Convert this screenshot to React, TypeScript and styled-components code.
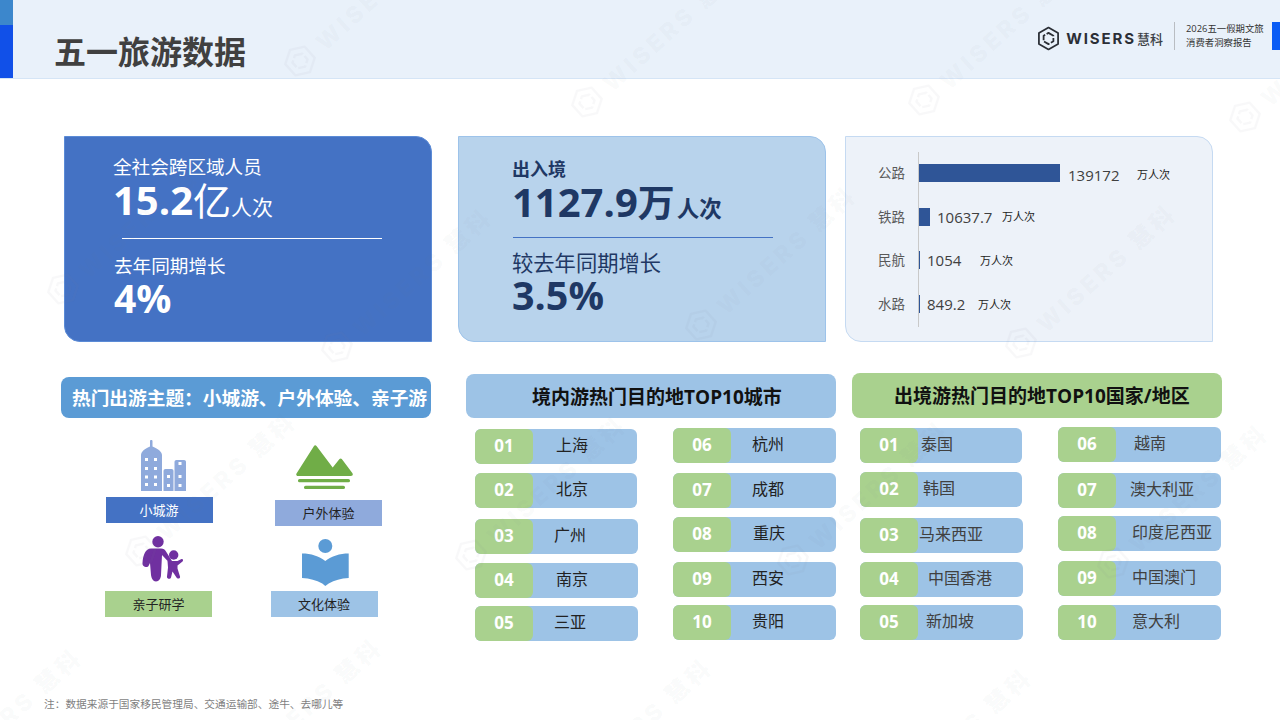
import React from 'react';
import styled, { createGlobalStyle } from 'styled-components';

const FONT = '"Open Sans", "Noto Sans CJK SC", sans-serif';

const GlobalStyle = createGlobalStyle`
  html, body {
    margin: 0;
    padding: 0;
    background: #fff;
    font-family: ${FONT};
  }
`;

const Page = styled.div`
  position: relative;
  width: 1280px;
  height: 720px;
  overflow: hidden;
  background: #fff;
`;

const Header = styled.header`
  height: 78px;
  display: flex;
  align-items: stretch;
  background: #e9f1fa;
  border-bottom: 1px solid #d5e5f6;
`;

const Stripe = styled.div`
  width: 13px;
  display: flex;
  flex-direction: column;
  background: #1150e8;

  &::before {
    content: '';
    height: 25px;
    background: #3c87cc;
  }
`;

const Title = styled.h1`
  margin: 32px 0 0 41px;
  font-size: 32px;
  line-height: 40px;
  font-weight: 700;
  color: #404040;
`;

const HeaderRight = styled.div`
  margin-left: auto;
  display: flex;
  align-items: flex-start;
  padding-top: 22px;
`;

const Brand = styled.div`
  display: flex;
  align-items: center;
  height: 28px;
  box-sizing: border-box;
  padding: 4px 11px 0 0;
  border-right: 1px solid #b9bdc2;
`;

const BrandName = styled.span`
  margin-left: 5px;
  font-family: Inter, sans-serif;
  font-size: 15px;
  font-weight: 700;
  letter-spacing: 1.9px;
  color: #2b2f36;
`;

const BrandCn = styled.span`
  margin-left: 1px;
  font-size: 13px;
  font-weight: 500;
  color: #3b3f45;
`;

const Report = styled.div`
  width: 86px;
  padding-left: 11px;
  font-size: 9.4px;
  line-height: 13.5px;
  color: #333;
`;

const Flag = styled.div`
  width: 8px;
  height: 28px;
  background: #0a5cf5;
`;

const TopRow = styled.section`
  display: flex;
  margin: 57px 0 0 64px;
`;

const Card = styled.div<{ $bg: string; $border: string; $gap?: number }>`
  width: 368px;
  height: 206px;
  box-sizing: border-box;
  margin-right: ${(p) => p.$gap ?? 0}px;
  background: ${(p) => p.$bg};
  border: 1px solid ${(p) => p.$border};
  border-radius: 0 16px 0 16px;
`;

const StatBody = styled.div<{ $left: number; $top: number; $color: string }>`
  padding: ${(p) => p.$top}px 0 0 ${(p) => p.$left}px;
  color: ${(p) => p.$color};
`;

const StatLabel = styled.div<{ $size: number; $weight?: number; $height: number }>`
  font-size: ${(p) => p.$size}px;
  font-weight: ${(p) => p.$weight ?? 400};
  line-height: ${(p) => p.$height}px;
`;

const StatValue = styled.div<{ $size: number; $height: number }>`
  font-size: ${(p) => p.$size}px;
  line-height: ${(p) => p.$height}px;
  font-weight: 700;
  white-space: nowrap;
`;

const Unit = styled.span<{ $size: number; $weight: number; $left?: number }>`
  margin-left: ${(p) => p.$left ?? 0}px;
  font-size: ${(p) => p.$size}px;
  font-weight: ${(p) => p.$weight};
`;

const Rule = styled.div<{ $color: string; $left: number; $top: number; $bottom: number }>`
  width: 260px;
  height: 1px;
  margin: ${(p) => p.$top}px 0 ${(p) => p.$bottom}px ${(p) => p.$left}px;
  background: ${(p) => p.$color};
`;

const ChartBody = styled.div`
  position: relative;
  display: flex;
  flex-direction: column;
  padding: 26px 0 0 32px;
`;

const Axis = styled.div`
  position: absolute;
  left: 72px;
  top: 15px;
  width: 1px;
  height: 175px;
  background: #c9c9c9;
`;

const ChartRow = styled.div`
  height: 43.5px;
  display: flex;
  align-items: flex-start;
`;

const ChartName = styled.span`
  width: 41px;
  font-size: 13.5px;
  line-height: 20px;
  color: #595959;
`;

const Bar = styled.div`
  height: 18px;
  margin-top: 1px;
  background: #2f5597;
`;

const ChartValue = styled.span<{ $left: number; $width: number; $top: number }>`
  width: ${(p) => p.$width}px;
  margin-left: ${(p) => p.$left}px;
  margin-top: ${(p) => p.$top}px;
  font-size: 15px;
  line-height: 20px;
  color: #404040;
  white-space: nowrap;
`;

const ChartUnit = styled.span<{ $top: number }>`
  margin-top: ${(p) => p.$top}px;
  font-size: 11px;
  line-height: 20px;
  color: #222;
  white-space: nowrap;
`;

const BottomRow = styled.section`
  display: flex;
  margin: 31px 0 0 61px;
`;

const ThemeColumn = styled.div`
  width: 370px;
  margin-right: 35px;
`;

const ThemeBanner = styled.div`
  height: 41px;
  margin-top: 4px;
  padding-left: 7px;
  box-sizing: border-box;
  border-radius: 8px;
  background: #5b9bd5;
  color: #fff;
  font-size: 18.7px;
  font-weight: 700;
  line-height: 41px;
  text-align: center;
  white-space: nowrap;
`;

const ThemeGrid = styled.div`
  display: grid;
  grid-template-columns: 168px 168px;
  padding-left: 14px;
`;

const ThemeItem = styled.div<{ $top: number; $gap: number; $nudge?: number; $icon?: number }>`
  display: flex;
  flex-direction: column;
  align-items: center;
  gap: ${(p) => p.$gap}px;
  padding-top: ${(p) => p.$top}px;
  margin-left: ${(p) => p.$nudge ?? 0}px;

  svg {
    display: block;
    margin-left: ${(p) => p.$icon ?? 0}px;
  }
`;

const ThemeLabel = styled.div<{ $bg: string; $color: string }>`
  width: 107px;
  height: 26px;
  background: ${(p) => p.$bg};
  color: ${(p) => p.$color};
  font-size: 13px;
  line-height: 26px;
  text-align: center;
`;

const RankColumn = styled.div<{ $gap?: number }>`
  width: 370px;
  margin-right: ${(p) => p.$gap ?? 0}px;
`;

const RankTitle = styled.div<{ $bg: string; $indent: number; $top: number }>`
  height: ${(p) => 45 - p.$top}px;
  margin-top: ${(p) => p.$top}px;
  box-sizing: border-box;
  padding-left: ${(p) => p.$indent}px;
  border-radius: 8px;
  background: ${(p) => p.$bg};
  color: #111;
  font-size: 19px;
  font-weight: 700;
  line-height: 46px;
  white-space: nowrap;
`;

const RankLists = styled.div<{ $pad: number }>`
  display: grid;
  grid-template-columns: 162px 163px;
  column-gap: 36px;
  padding-left: ${(p) => p.$pad}px;
`;

const RankList = styled.div``;

const RankRow = styled.div<{ $top: number; $width: number }>`
  width: ${(p) => p.$width}px;
  height: 35px;
  margin-top: ${(p) => p.$top}px;
  display: flex;
  border-radius: 6px;
  background: #9dc3e6;
`;

const RankNo = styled.div`
  width: 58px;
  flex: none;
  border-radius: 6px;
  background: #a9d18e;
  color: #fff;
  font-size: 17px;
  font-weight: 700;
  line-height: 34px;
  text-align: center;
`;

const RankName = styled.div<{ $indent: number; $color: string }>`
  padding-left: ${(p) => p.$indent}px;
  color: ${(p) => p.$color};
  font-size: 16px;
  line-height: 33px;
  white-space: nowrap;
`;

const Note = styled.div`
  position: absolute;
  left: 44px;
  top: 696px;
  font-size: 10.7px;
  line-height: 16px;
  color: #7f7f7f;
`;

const MarkLayer = styled.div`
  position: absolute;
  inset: 0;
  pointer-events: none;
`;

const Mark = styled.div`
  position: absolute;
  display: flex;
  align-items: center;
  gap: 8px;
  transform: rotate(-42deg);
  transform-origin: 17px 17px;
  color: rgba(120, 130, 150, 0.055);
  font-family: Inter, "Noto Sans CJK SC", sans-serif;
  font-size: 23px;
  font-weight: 800;
  letter-spacing: 4px;
  white-space: nowrap;
`;

function Hexagon({ size, color }: { size: number; color: string }) {
  return (
    <svg width={size} height={size} viewBox="0 0 24 24" fill="none">
      <path
        d="M12 1.5 21.2 6.7V17.3L12 22.5 2.8 17.3V6.7Z"
        stroke={color}
        strokeWidth="1.7"
        strokeLinejoin="round"
      />
      <path
        d="M12 6.6 16.7 9.3V14.7L12 17.4 7.3 14.7V9.3Z"
        stroke={color}
        strokeWidth="1.7"
        strokeLinejoin="round"
        strokeDasharray="6 1.6"
      />
    </svg>
  );
}

function CityIcon() {
  return (
    <svg width="45" height="51" viewBox="0 0 45 51" fill="#8faadc">
      <path d="M0 15c0-3 3-6 9-8.500V1c0-1.300 2.500-1.300 2.500 0v5.500c6 2.500 9.500 5.500 9.500 8.500v36H0Z" />
      <path d="M22.500 31c0-1.200.8-2 2-2h6c1.200 0 2 .8 2 2v20h-10Z" />
      <path d="M33.500 22c0-1.200.8-2 2-2h7.500c1.200 0 2 .8 2 2v29H33.500Z" />
      <g fill="#fff">
        {[18, 27, 35.500, 43].map((y) =>
          [4, 13].map((x) => <rect key={`${x}-${y}`} x={x} y={y} width="3" height="3" />),
        )}
        {[35, 44].map((y) => (
          <rect key={y} x="26" y={y} width="3" height="3" />
        ))}
        {[22, 35, 44].map((y) => (
          <rect key={y} x="37.500" y={y} width="3" height="3" />
        ))}
      </g>
    </svg>
  );
}

function MountainIcon() {
  return (
    <svg width="57" height="45" viewBox="0 0 57 45" fill="#70ad47">
      <path d="M.5 28.500 18 1a1.500 1.500 0 0 1 2.500 0L36.700 22.500l6.800-8.400a1.500 1.500 0 0 1 2.300 0l10.500 14c1 1.500.5 2.900-1.500 2.900H2c-1.500 0-2.200-1.200-1.500-2.500Z" />
      <rect x="2" y="34" width="52" height="3.300" rx="1.600" />
      <rect x="8" y="40.700" width="41" height="3.300" rx="1.600" />
    </svg>
  );
}

function FamilyIcon() {
  return (
    <svg width="41" height="46" viewBox="0 0 41 46" fill="#7030a0">
      <circle cx="16" cy="5.700" r="5.700" />
      <circle cx="31.700" cy="19" r="4.700" />
      <path d="M9 12.500h10c2.500 0 4 1 5 3l6 9.500-2.500 2-7.500-8-1 20c0 3-2 6.500-5 6.500s-4.500-3-5-6.500L8 27l-1.500 3c-1 2-6.500 1-6-3 .5-8 3-14.500 8.500-14.500Z" />
      <path d="M25.500 25h10l4-2c1.500-.5 2 1.500 1 2.500l-5 4v3l2.500 8c.5 2-2.500 3-3.500 1l-4-6-1.500 6c-.5 2-4.500 1.500-4-1l1-9Z" />
    </svg>
  );
}

function BookIcon() {
  return (
    <svg width="47" height="47" viewBox="0 0 47 47" fill="#5b9bd5">
      <circle cx="23.300" cy="7" r="7" />
      <path d="M0 14.500c9 0 17 2.500 23.300 7.500 6.300-5 14.400-7.500 23.400-7.500V39c-8 .5-14 2-20 5.500L23.300 47l-3-2.500C14 41 8 39.500 0 39Z" />
    </svg>
  );
}

interface Item {
  no: string;
  name: string;
  top: number;
  indent: number;
  width: number;
}

const DOMESTIC: Item[][] = [
  [
    { no: '01', name: '上海', top: 11, indent: 23, width: 162 },
    { no: '02', name: '北京', top: 9, indent: 23, width: 162 },
    { no: '03', name: '广州', top: 11, indent: 21, width: 163 },
    { no: '04', name: '南京', top: 9, indent: 23, width: 163 },
    { no: '05', name: '三亚', top: 8, indent: 21, width: 163 },
  ],
  [
    { no: '06', name: '杭州', top: 10, indent: 21, width: 163 },
    { no: '07', name: '成都', top: 10, indent: 21, width: 163 },
    { no: '08', name: '重庆', top: 9, indent: 22, width: 163 },
    { no: '09', name: '西安', top: 10, indent: 21, width: 163 },
    { no: '10', name: '贵阳', top: 8, indent: 21, width: 163 },
  ],
];

const OUTBOUND: Item[][] = [
  [
    { no: '01', name: '泰国', top: 10, indent: 3, width: 162 },
    { no: '02', name: '韩国', top: 9, indent: 5, width: 162 },
    { no: '03', name: '马来西亚', top: 11, indent: 1, width: 163 },
    { no: '04', name: '中国香港', top: 9, indent: 10, width: 163 },
    { no: '05', name: '新加坡', top: 8, indent: 8, width: 163 },
  ],
  [
    { no: '06', name: '越南', top: 9, indent: 18, width: 163 },
    { no: '07', name: '澳大利亚', top: 11, indent: 14, width: 163 },
    { no: '08', name: '印度尼西亚', top: 8, indent: 16, width: 163 },
    { no: '09', name: '中国澳门', top: 10, indent: 16, width: 163 },
    { no: '10', name: '意大利', top: 9, indent: 16, width: 163 },
  ],
];

const CHART = [
  { name: '公路', bar: 141, value: '139172', left: 8, valueWidth: 69, valueTop: 2, unitTop: 2 },
  { name: '铁路', bar: 11, value: '10637.7', left: 7, valueWidth: 65, valueTop: 0, unitTop: 0 },
  { name: '民航', bar: 1, value: '1054', left: 7, valueWidth: 53, valueTop: 0, unitTop: 1 },
  { name: '水路', bar: 1, value: '849.2', left: 7, valueWidth: 51, valueTop: 0, unitTop: 1 },
];

const MARKS = [
  [283, 44], [570, 85], [907, 83], [1228, 100],
  [46, 272], [320, 330], [684, 308], [1004, 326],
  [124, 534], [454, 538], [776, 543], [1096, 546],
  [-90, 770], [210, 760], [540, 780], [860, 790],
];

function RankBlock({ lists, color, pad }: { lists: Item[][]; color: string; pad: number }) {
  return (
    <RankLists $pad={pad}>
      {lists.map((list) => (
        <RankList key={list[0].no}>
          {list.map((item) => (
            <RankRow key={item.no} $top={item.top} $width={item.width}>
              <RankNo>{item.no}</RankNo>
              <RankName $indent={item.indent} $color={color}>
                {item.name}
              </RankName>
            </RankRow>
          ))}
        </RankList>
      ))}
    </RankLists>
  );
}

export default function App() {
  return (
    <Page>
      <GlobalStyle />
      <Header>
        <Stripe />
        <Title>五一旅游数据</Title>
        <HeaderRight>
          <Brand>
            <Hexagon size={25} color="#2b2f36" />
            <BrandName>WISERS</BrandName>
            <BrandCn>慧科</BrandCn>
          </Brand>
          <Report>
            2026五一假期文旅
            <br />
            消费者洞察报告
          </Report>
          <Flag />
        </HeaderRight>
      </Header>

      <TopRow>
        <Card $bg="#4472c4" $border="#5b8bd6" $gap={26}>
          <StatBody $left={48} $top={18} $color="#fff">
            <StatLabel $size={18.6} $height={24}>全社会跨区域人员</StatLabel>
            <StatValue $size={40} $height={42}>
              15.2<Unit $size={38} $weight={400}>亿</Unit>
              <Unit $size={21} $weight={400}>人次</Unit>
            </StatValue>
          </StatBody>
          <Rule $color="#fff" $left={57} $top={10} $bottom={14} />
          <StatBody $left={49} $top={0} $color="#fff">
            <StatLabel $size={18.6} $height={26}>去年同期增长</StatLabel>
            <StatValue $size={39} $height={38}>4%</StatValue>
          </StatBody>
        </Card>

        <Card $bg="#b8d3ec" $border="#9dc3ea" $gap={19}>
          <StatBody $left={53} $top={20} $color="#1f3864">
            <StatLabel $size={18} $weight={700} $height={24}>出入境</StatLabel>
            <StatValue $size={40} $height={42}>
              1127.9<Unit $size={37} $weight={700}>万</Unit>
              <Unit $size={22.500} $weight={700} $left={2}>人次</Unit>
            </StatValue>
          </StatBody>
          <Rule $color="#4472c4" $left={54} $top={7} $bottom={12} />
          <StatBody $left={53} $top={0} $color="#1f3864">
            <StatLabel $size={21.300} $height={26}>较去年同期增长</StatLabel>
            <StatValue $size={39.500} $height={38}>3.5%</StatValue>
          </StatBody>
        </Card>

        <Card $bg="#edf2f9" $border="#c5daf2">
          <ChartBody>
            <Axis />
            {CHART.map((row) => (
              <ChartRow key={row.name}>
                <ChartName>{row.name}</ChartName>
                <Bar style={{ width: row.bar }} />
                <ChartValue $left={row.left} $width={row.valueWidth} $top={row.valueTop}>
                  {row.value}
                </ChartValue>
                <ChartUnit $top={row.unitTop}>万人次</ChartUnit>
              </ChartRow>
            ))}
          </ChartBody>
        </Card>
      </TopRow>

      <BottomRow>
        <ThemeColumn>
          <ThemeBanner>热门出游主题：小城游、户外体验、亲子游</ThemeBanner>
          <ThemeGrid>
            <ThemeItem $top={22} $gap={6} $icon={8}>
              <CityIcon />
              <ThemeLabel $bg="#4472c4" $color="#fff">小城游</ThemeLabel>
            </ThemeItem>
            <ThemeItem $top={27} $gap={10} $nudge={3} $icon={-8}>
              <MountainIcon />
              <ThemeLabel $bg="#8faadc" $color="#222">户外体验</ThemeLabel>
            </ThemeItem>
            <ThemeItem $top={10} $gap={9} $nudge={-1} $icon={8}>
              <FamilyIcon />
              <ThemeLabel $bg="#a9d18e" $color="#222">亲子研学</ThemeLabel>
            </ThemeItem>
            <ThemeItem $top={13} $gap={5} $nudge={-6} $icon={2}>
              <BookIcon />
              <ThemeLabel $bg="#9dc3e6" $color="#222">文化体验</ThemeLabel>
            </ThemeItem>
          </ThemeGrid>
        </ThemeColumn>

        <RankColumn $gap={16}>
          <RankTitle $bg="#9dc3e6" $indent={66} $top={1}>境内游热门目的地TOP10城市</RankTitle>
          <RankBlock lists={DOMESTIC} color="#222" pad={9} />
        </RankColumn>

        <RankColumn>
          <RankTitle $bg="#a9d18e" $indent={42} $top={0}>出境游热门目的地TOP10国家/地区</RankTitle>
          <RankBlock lists={OUTBOUND} color="#404040" pad={8} />
        </RankColumn>
      </BottomRow>

      <Note>注：数据来源于国家移民管理局、交通运输部、途牛、去哪儿等</Note>

      <MarkLayer>
        {MARKS.map(([x, y]) => (
          <Mark key={`${x}-${y}`} style={{ left: x, top: y }}>
            <Hexagon size={34} color="rgba(120, 130, 150, 0.055)" />
            WISERS 慧科
          </Mark>
        ))}
      </MarkLayer>
    </Page>
  );
}
